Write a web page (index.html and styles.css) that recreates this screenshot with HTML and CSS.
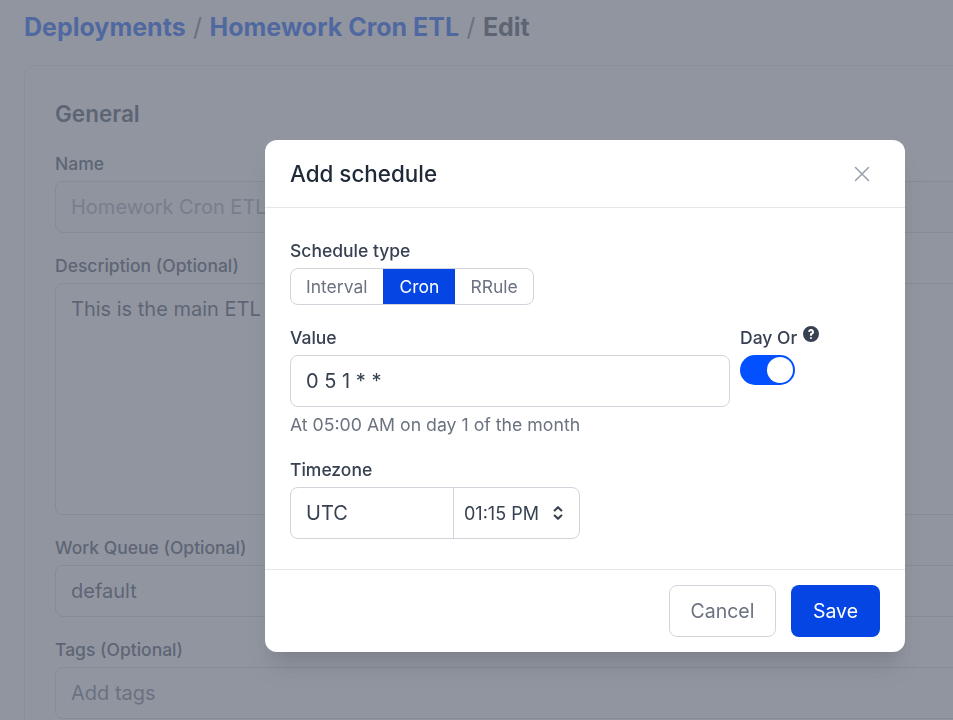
FILE: index.html
```html
<!DOCTYPE html>
<html lang="en">
<head>
  <meta charset="UTF-8">
  <title>Add schedule</title>
  <link rel="stylesheet" href="styles.css">
</head>
<body>
<div class="page">
  <h1 class="crumbs">
    <a class="crumb-link">Deployments</a>
    <span class="crumb-sep">/</span>
    <a class="crumb-link">Homework Cron ETL</a>
    <span class="crumb-sep">/</span>
    <span class="crumb-current">Edit</span>
  </h1>
  <div class="card">
    <h2 class="card-title">General</h2>
    <div class="field">
      <label class="label">Name</label>
      <div class="input input-disabled">Homework Cron ETL</div>
    </div>
    <div class="field">
      <label class="label">Description (Optional)</label>
      <div class="input textarea">This is the main ETL</div>
    </div>
    <div class="field">
      <label class="label">Work Queue (Optional)</label>
      <div class="input">default</div>
    </div>
    <div class="field">
      <label class="label">Tags (Optional)</label>
      <div class="input input-placeholder">Add tags</div>
    </div>
  </div>
</div>

<div class="overlay">
  <div class="modal">
    <div class="modal-header">
      <h3 class="modal-title">Add schedule</h3>
      <svg class="close-icon" viewBox="0 0 24 24" fill="none" stroke="currentColor" stroke-width="1.5" stroke-linecap="round">
        <path d="M6 18L18 6M6 6l12 12"/>
      </svg>
    </div>
    <div class="modal-body">
      <div class="field">
        <label class="label">Schedule type</label>
        <div class="segments">
          <span class="segment segment-first">Interval</span>
          <span class="segment segment-active">Cron</span>
          <span class="segment">RRule</span>
        </div>
      </div>
      <div class="value-row">
        <div class="value-col">
          <label class="label">Value</label>
          <div class="input">0 5 1 * *</div>
          <p class="hint">At 05:00 AM on day 1 of the month</p>
        </div>
        <div class="dayor">
          <div class="dayor-label">
            <span class="label">Day Or</span>
            <svg class="help-icon" viewBox="0 0 20 20" fill="currentColor">
              <path fill-rule="evenodd" clip-rule="evenodd" d="M18 10a8 8 0 11-16 0 8 8 0 0116 0zm-8-3a1 1 0 00-.867.5 1 1 0 11-1.731-1A3 3 0 0113 8a3.001 3.001 0 01-2 2.83V11a1 1 0 11-2 0v-1a1 1 0 011-1 1 1 0 100-2zm0 8a1 1 0 100-2 1 1 0 000 2z"/>
            </svg>
          </div>
          <div class="toggle"><span class="toggle-knob"></span></div>
        </div>
      </div>
      <div class="field">
        <label class="label">Timezone</label>
        <div class="timezone">
          <span class="tz-name">UTC</span>
          <span class="tz-time">
            01:15 PM
            <svg class="selector-icon" viewBox="0 0 24 24" fill="none" stroke="currentColor" stroke-width="2.5" stroke-linecap="round" stroke-linejoin="round">
              <path d="M8 9l4-4 4 4m0 6l-4 4-4-4"/>
            </svg>
          </span>
        </div>
      </div>
    </div>
    <div class="modal-footer">
      <button class="btn btn-cancel">Cancel</button>
      <button class="btn btn-save">Save</button>
    </div>
  </div>
</div>
</body>
</html>
```

FILE: styles.css
```css
* {
  margin: 0;
  padding: 0;
  box-sizing: border-box;
}
html, body {
  height: 100%;
  overflow: hidden;
}
body {
  background-color: #fff;
  font-family: Inter, "Liberation Sans", sans-serif;
  color: #374151;
}
.page {
  width: 953px;
  height: 720px;
  overflow: hidden;
  padding: 11px 0 0 24px;
}
.crumbs {
  font-size: 25px;
  line-height: 32px;
  font-weight: 700;
  height: 54px;
  color: #374151;
  white-space: nowrap;
}
.crumb-link {
  color: #024dfd;
}
.crumb-sep {
  font-weight: 400;
  color: #6b7280;
  margin: 0 1.5px;
}
.card {
  width: 1200px;
  border: 1px solid #e5e7eb;
  border-radius: 12px;
  padding: 34px 30px;
  display: flex;
  flex-direction: column;
  gap: 21px;
}
.card-title {
  font-size: 22.5px;
  line-height: 28px;
  font-weight: 600;
  margin-bottom: 3px;
  color: #374151;
}
.label {
  display: block;
  font-size: 17.5px;
  line-height: 24px;
  font-weight: 500;
  color: #374151;
}
.field .label,
.value-col .label {
  margin-bottom: 5px;
}
.input {
  height: 52px;
  border: 1px solid #d1d5db;
  border-radius: 8px;
  padding: 0 15px;
  font-size: 20px;
  line-height: 50px;
  color: #374151;
  background-color: #fff;
}
.input-disabled {
  color: #9ca3af;
  background-color: #f9fafb;
}
.input-placeholder {
  color: #6b7280;
}
.textarea {
  height: 232px;
}

.overlay {
  position: fixed;
  top: 0;
  left: 0;
  right: 0;
  bottom: 0;
  background-color: rgba(107, 114, 128, .75);
  padding: 140px 0 0 265px;
}
.modal {
  width: 640px;
  height: 512px;
  background-color: #fff;
  border-radius: 12px;
  overflow: hidden;
  box-shadow: 0 20px 25px -5px rgba(0, 0, 0, .1), 0 10px 10px -5px rgba(0, 0, 0, .04);
}
.modal-header {
  height: 68px;
  padding: 0 30px 0 25px;
  border-bottom: 1px solid #e5e7eb;
  display: flex;
  align-items: center;
  justify-content: space-between;
}
.modal-title {
  font-size: 22.4px;
  font-weight: 500;
  color: #1f2937;
}
.close-icon {
  width: 26px;
  height: 26px;
  color: #9ca3af;
}
.modal-body {
  height: 361px;
  padding: 31px 25px 0;
  display: flex;
  flex-direction: column;
  gap: 21px;
}
.segments {
  display: inline-flex;
  height: 37px;
  border: 1px solid #d1d5db;
  border-radius: 8px;
  overflow: hidden;
  font-size: 17.5px;
  color: #6b7280;
}
.segment {
  padding: 0 15px;
  line-height: 35px;
}
.segment-first {
  padding-right: 16px;
}
.segment-active {
  background-color: #0445e3;
  color: #fff;
  margin: -1px 0;
  line-height: 37px;
  padding: 0 16px;
}
.value-row {
  display: grid;
  grid-template-columns: 440px 1fr;
  column-gap: 10px;
}
.hint {
  margin-top: 5px;
  margin-bottom: 1px;
  font-size: 17.7px;
  line-height: 25px;
  height: 24px;
  color: #6b7280;
}
.dayor-label {
  display: flex;
  align-items: flex-start;
  gap: 4px;
  height: 29px;
}
.help-icon {
  width: 20px;
  height: 20px;
  color: #374151;
  margin-top: -2px;
}
.toggle {
  width: 55px;
  height: 30px;
  border-radius: 15px;
  background-color: #0250ff;
  display: flex;
  align-items: center;
  justify-content: flex-end;
  padding-right: 2px;
}
.toggle-knob {
  width: 26px;
  height: 26px;
  border-radius: 50%;
  background-color: #fff;
}
.timezone {
  display: flex;
  width: 290px;
  height: 52px;
  border: 1px solid #d1d5db;
  border-radius: 8px;
  color: #374151;
}
.tz-name {
  width: 163px;
  padding-left: 15px;
  font-size: 20px;
  line-height: 50px;
  border-right: 1px solid #d1d5db;
}
.tz-time {
  flex: 1;
  display: flex;
  align-items: center;
  justify-content: space-between;
  padding: 0 11px 0 10px;
  font-size: 18px;
}
.selector-icon {
  width: 20px;
  height: 20px;
}
.modal-footer {
  height: 83px;
  border-top: 1px solid #e5e7eb;
  padding: 15px 25px;
  display: flex;
  justify-content: flex-end;
  gap: 15px;
}
.btn {
  height: 52px;
  border-radius: 8px;
  font-family: inherit;
  font-size: 19.5px;
}
.btn-cancel {
  width: 107px;
  border: 1px solid #d1d5db;
  background-color: #fff;
  color: #6b7280;
}
.btn-save {
  width: 89px;
  border: none;
  background-color: #0445e3;
  color: #fff;
}
```
